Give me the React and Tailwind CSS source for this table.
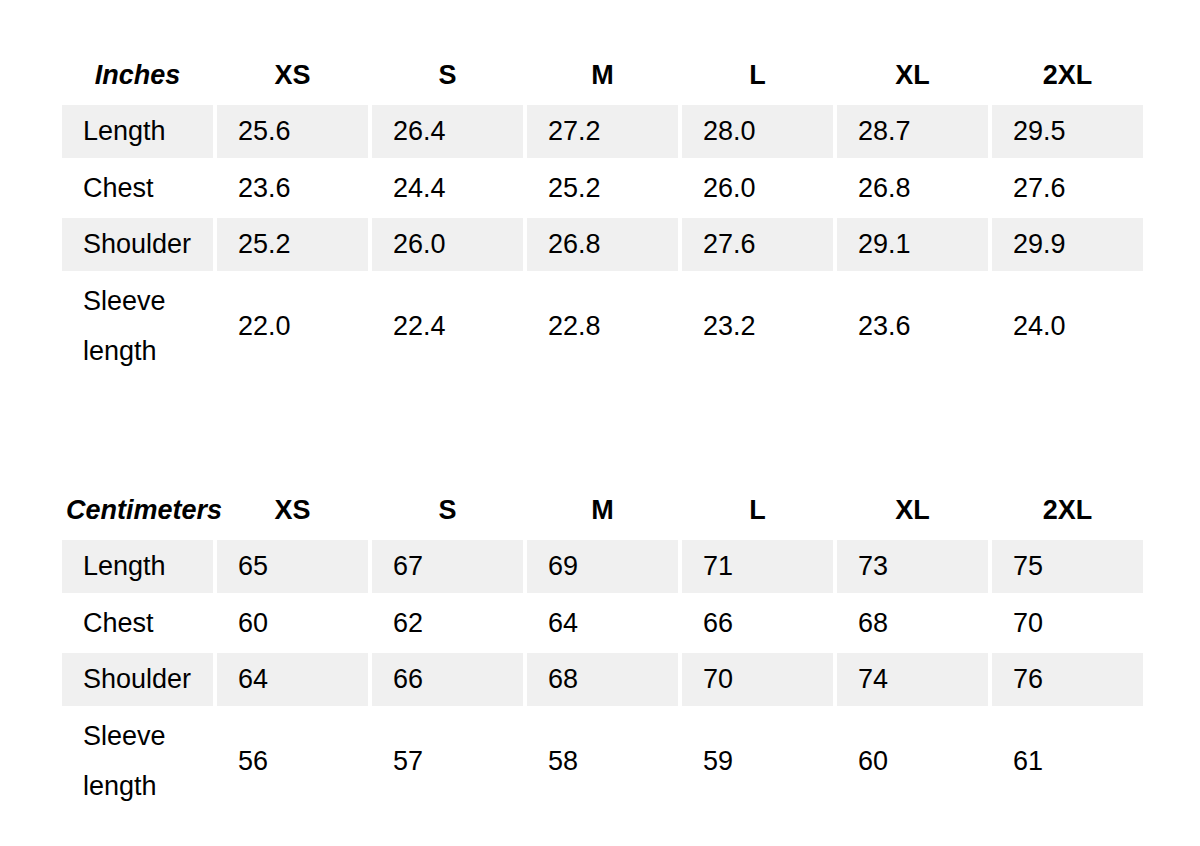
// Size chart — two tables (inches / centimeters), zebra rows on a white page.

const SIZES = ['XS', 'S', 'M', 'L', 'XL', '2XL'];

const TABLES = [
  {
    unit: 'Inches',
    rows: [
      { label: ['Length'], values: ['25.6', '26.4', '27.2', '28.0', '28.7', '29.5'] },
      { label: ['Chest'], values: ['23.6', '24.4', '25.2', '26.0', '26.8', '27.6'] },
      { label: ['Shoulder'], values: ['25.2', '26.0', '26.8', '27.6', '29.1', '29.9'] },
      { label: ['Sleeve', 'length'], values: ['22.0', '22.4', '22.8', '23.2', '23.6', '24.0'] },
    ],
  },
  {
    unit: 'Centimeters',
    rows: [
      { label: ['Length'], values: ['65', '67', '69', '71', '73', '75'] },
      { label: ['Chest'], values: ['60', '62', '64', '66', '68', '70'] },
      { label: ['Shoulder'], values: ['64', '66', '68', '70', '74', '76'] },
      { label: ['Sleeve', 'length'], values: ['56', '57', '58', '59', '60', '61'] },
    ],
  },
];

function SizeTable({ unit, rows }) {
  return (
    <div className="grid grid-cols-[repeat(7,151px)] gap-x-[4px] gap-y-[4px]">
      {/* header row — unit label spills to the right when too wide, like a table cell */}
      <div className="h-[52px] whitespace-nowrap px-[4px] text-center text-[27px] font-bold italic leading-[52px]">
        {unit}
      </div>
      {SIZES.map((s) => (
        <div key={s} className="h-[52px] text-center text-[27px] font-bold leading-[52px]">
          {s}
        </div>
      ))}

      {rows.map((row, i) => {
        const bg = i % 2 === 0 ? 'bg-[#f0f0f0]' : 'bg-white';
        return [
          <div key={`l${i}`} className={`${bg} flex flex-col justify-center py-[1.25px] pl-[21px] text-[27px] leading-[50px]`}>
            {row.label.map((t) => (
              <span key={t}>{t}</span>
            ))}
          </div>,
          ...row.values.map((v, j) => (
            <div key={`v${i}-${j}`} className={`${bg} flex items-center py-[1.25px] pl-[21px] text-[27px] leading-[50px]`}>
              {v}
            </div>
          )),
        ];
      })}
    </div>
  );
}

export default function App() {
  return (
    <div className="min-h-[846px] w-full bg-white pl-[62px] pt-[49px] text-black font-['Liberation_Sans',Arial,sans-serif]">
      <SizeTable {...TABLES[0]} />
      <div className="mt-[107px]">
        <SizeTable {...TABLES[1]} />
      </div>
    </div>
  );
}
